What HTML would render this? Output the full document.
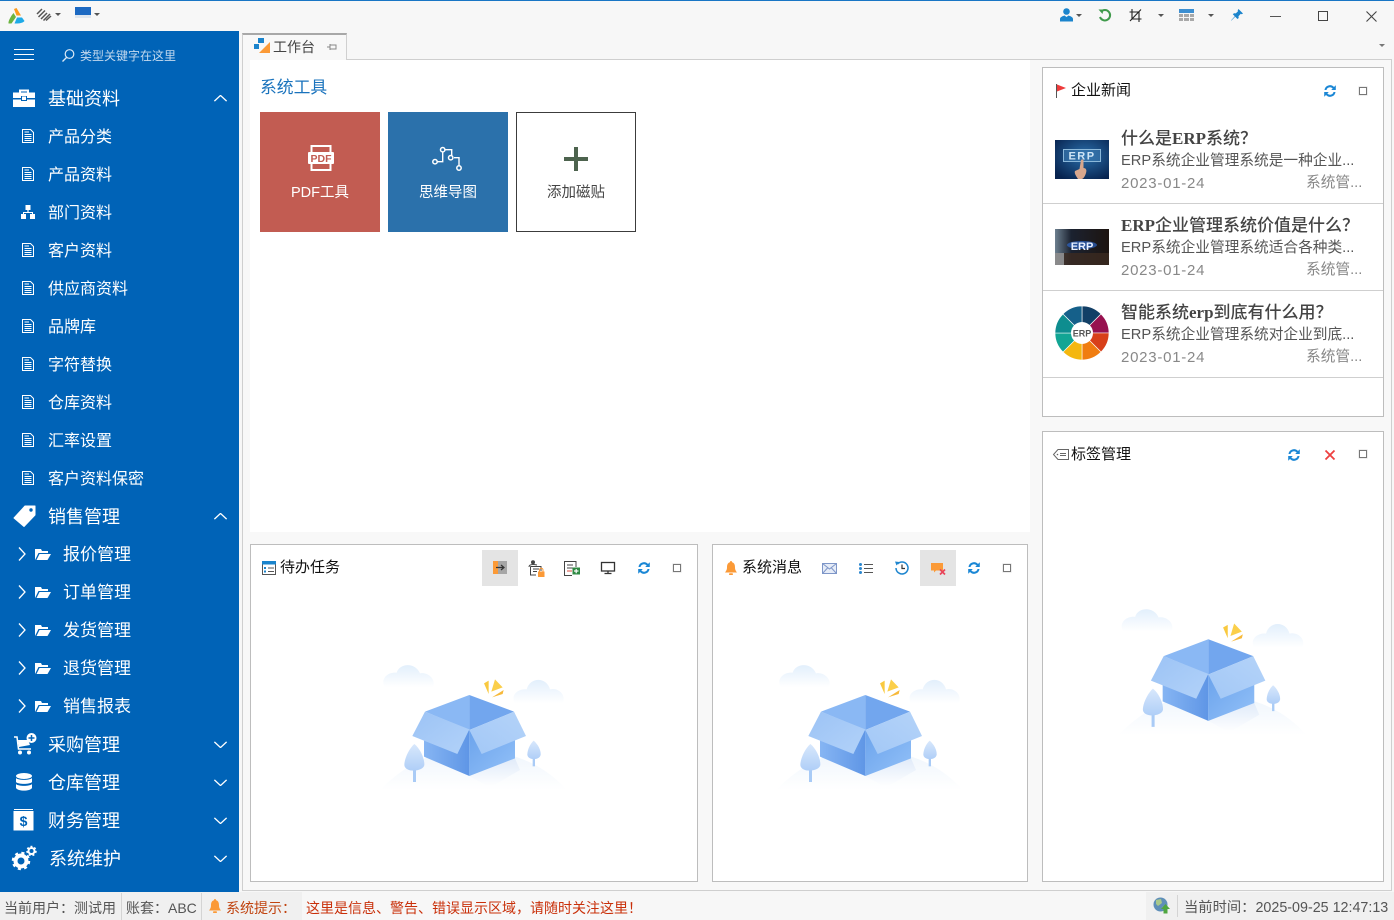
<!DOCTYPE html>
<html lang="zh"><head><meta charset="utf-8"><title>工作台</title>
<style>
*{margin:0;padding:0;box-sizing:border-box}
html,body{width:1394px;height:920px;overflow:hidden;background:#f7f7f7}
body{position:relative;font-family:"Liberation Sans","Noto Sans CJK SC",sans-serif;font-size:14px;color:#333}
.a{position:absolute;white-space:nowrap}
svg{position:absolute;overflow:visible}
#side{left:0;top:31px;width:239px;height:861px;background:#0063b7}
.m{position:absolute;left:48px;color:#fff;font-size:18px;line-height:24px;white-space:nowrap}
.s{position:absolute;left:48px;color:#fff;font-size:16px;line-height:24px;white-space:nowrap}
.f{position:absolute;left:63px;color:#fff;font-size:17px;line-height:24px;white-space:nowrap}
.panel{position:absolute;background:#fff;border:1px solid #bdbdbd}
.t{font-size:15px;line-height:20px;color:#111}
.nt{position:absolute;left:1121px;font-family:"Liberation Serif","Noto Sans CJK SC",serif;font-weight:500;font-size:17px;line-height:22px;color:#444;white-space:nowrap}
.nt b{font-weight:700}
.nd{position:absolute;left:1121px;font-size:14.7px;line-height:20px;color:#555;white-space:nowrap}
.nm{position:absolute;left:1121px;font-size:15px;line-height:20px;color:#888;white-space:nowrap;letter-spacing:.75px}
.na{position:absolute;left:1306px;font-size:14.7px;line-height:20px;color:#888;white-space:nowrap}
.line{position:absolute;left:1043px;width:340px;height:1px;background:#cfcfcf}
.st{position:absolute;top:898px;font-size:14px;line-height:20px;color:#555;white-space:nowrap}
.tile{position:absolute;top:112px;width:120px;height:120px;text-align:center;font-size:14.5px}
.tile span{position:absolute;left:0;right:0;top:71px;line-height:20px}
.sq{position:absolute;width:8px;height:8px;border:1px solid #777;box-shadow:0 0 0 .5px #ddd}
</style></head>
<body>
<svg width="0" height="0" style="position:absolute">
<defs>
<linearGradient id="cl" x1="0" y1="0" x2="0" y2="1"><stop offset="0" stop-color="#e2effc"/><stop offset="1" stop-color="#fff"/></linearGradient>
<linearGradient id="hl" x1="0" y1="0" x2="0" y2="1"><stop offset="0" stop-color="#eef5fc"/><stop offset="1" stop-color="#fff"/></linearGradient>
<linearGradient id="bl" x1="0" y1="0" x2="1" y2="0"><stop offset="0" stop-color="#86b5f3"/><stop offset="1" stop-color="#5f96e6"/></linearGradient>
<linearGradient id="br" x1="0" y1="0" x2="1" y2="1"><stop offset="0" stop-color="#6ba3ec"/><stop offset="1" stop-color="#93c1f8"/></linearGradient>
<linearGradient id="fl" x1="0" y1="0" x2="1" y2="1"><stop offset="0" stop-color="#9cc3f5"/><stop offset="1" stop-color="#b2d2f9"/></linearGradient>
<linearGradient id="fr" x1="1" y1="0" x2="0" y2="1"><stop offset="0" stop-color="#b4d3f9"/><stop offset="1" stop-color="#a3c8f6"/></linearGradient>
<linearGradient id="tr" x1="0" y1="0" x2="0" y2="1"><stop offset="0" stop-color="#d8e8fc"/><stop offset="1" stop-color="#afcef7"/></linearGradient>
<linearGradient id="sh" x1="0" y1="0" x2="0" y2="1"><stop offset="0" stop-color="#dfeaf9"/><stop offset="1" stop-color="#fff"/></linearGradient>
<symbol id="box" viewBox="0 0 630 450">
<path d="M30 420C110 340 190 300 300 300C420 300 520 340 590 420Z" fill="url(#hl)"/>
<path d="M45 112C30 90 50 65 80 68C88 40 135 35 150 70C175 65 200 90 188 112Z" fill="url(#cl)"/>
<path d="M435 160C420 135 445 115 470 118C480 80 530 80 540 118C565 112 590 135 578 160Z" fill="url(#cl)"/>
<path d="M165 322L298 378L360 412L450 360L435 325Z" fill="url(#sh)"/>
<path d="M165 185L298 135V240Z" fill="#8ab8f4"/><path d="M298 135L432 185L298 240Z" fill="#72a6ee"/>
<path d="M162 270L298 240V378L162 320Z" fill="url(#bl)"/>
<path d="M298 240L435 270V325L298 378Z" fill="url(#br)"/>
<path d="M165 185L298 238L262 312L127 258Z" fill="url(#fl)"/>
<path d="M432 185L468 258L335 312L298 240Z" fill="url(#fr)"/>
<rect x="129" y="360" width="9" height="36" fill="#a9cbf6"/>
<path d="M133 282C150 295 164 325 163 345C160 365 105 370 103 345C103 325 118 295 133 282Z" fill="url(#tr)"/>
<rect x="488" y="325" width="7" height="24" fill="#a9cbf6"/>
<path d="M491 272C503 282 513 300 512 314C510 332 473 332 472 314C472 300 480 282 491 272Z" fill="url(#tr)"/>
<path d="M342 100L356 92L356 132Z" fill="#f9c93f"/><path d="M375 88L398 112L364 125Z" fill="#fbcf4a"/><path d="M366 142L401 120L398 132Z" fill="#f7b93a"/>
</symbol>
<symbol id="doc" viewBox="0 0 12 14"><path d="M.5 .5H8.500L11.500 3.500V13.500H.5Z" fill="none" stroke="#fff"/><path d="M2.500 3H7M2.500 5.500H9.500M2.500 7.500H9.500M2.500 9.500H9.500M2.500 11.500H9.500" stroke="#fff"/></symbol>
<symbol id="chevd" viewBox="0 0 16 8"><path d="M1 1L8 7.500L15 1" fill="none" stroke="#fff" stroke-width="1.500"/></symbol>
<symbol id="chevu" viewBox="0 0 16 8"><path d="M1 7L8 .5L15 7" fill="none" stroke="#fff" stroke-width="1.500"/></symbol>
<symbol id="chevr" viewBox="0 0 8 14"><path d="M1 .5L7 7L1 13.500" fill="none" stroke="#fff" stroke-width="1.300"/></symbol>
<symbol id="fold" viewBox="0 0 16 11"><path d="M0 11V0H6L7 2H13V4H3.500L0 11Z" fill="#fff"/><path d="M4.500 5H16L12.500 11H1.500Z" fill="#fff"/></symbol>
<symbol id="ref" viewBox="0 0 14 14"><path d="M1.500 6A5.500 5.500 0 0 1 11 3L12.800 1.200V6H8.200L9.700 4.500A3.600 3.600 0 0 0 3.500 6Z" fill="#1b87d5"/><path d="M12.500 8A5.500 5.500 0 0 1 3 11L1.200 12.800V8H5.800L4.300 9.500A3.600 3.600 0 0 0 10.500 8Z" fill="#1b87d5"/></symbol>
<symbol id="bell" viewBox="0 0 12 14"><path d="M6 0C7 0 7 1 7 1.200C9.500 1.800 10 4 10 6.500C10 9 11 10 12 11.500H0C1 10 2 9 2 6.500C2 4 2.500 1.800 5 1.200C5 1 5 0 6 0Z" fill="#fb9a37"/><rect x="4" y="12.300" width="4" height="1.700" rx=".8" fill="#fb9a37"/></symbol>
</defs></svg>

<!-- top bar -->
<div class="a" style="left:0;top:0;width:1394px;height:1px;background:#1976c5"></div>
<svg style="left:8px;top:8px" width="17" height="16" viewBox="0 0 17 16"><path d="M6 1L8.500 0L13 7.500L8.500 7.500Z" fill="#fc9a1c"/><path d="M5.500 5L8 9L3.500 15.500L.5 15.500C0 13 3 8 5.500 5Z" fill="#6cb43f"/><path d="M9 9.500H14L16.500 13C15 15 11 15.700 6.500 15.500Z" fill="#1eaae7"/></svg>
<svg style="left:37px;top:9px" width="14" height="12" viewBox="0 0 14 12"><path d="M0 5L5 0M1.500 8L8 1.500M4 10L10 4M6.500 11.500L13 5M9 11.500L14 7" stroke="#555" stroke-width="1.500"/></svg>
<svg style="left:55px;top:13px" width="6" height="3" viewBox="0 0 6 3"><path d="M0 0H6L3 3Z" fill="#555"/></svg>
<div class="a" style="left:75px;top:7px;width:16px;height:8px;background:#1c69c2"></div>
<div class="a" style="left:75px;top:15px;width:16px;height:3px;background:#dfe6ee"></div>
<svg style="left:94px;top:13px" width="6" height="3" viewBox="0 0 6 3"><path d="M0 0H6L3 3Z" fill="#555"/></svg>

<svg style="left:1060px;top:8px" width="13" height="14" viewBox="0 0 13 14"><circle cx="6.500" cy="3.500" r="3.300" fill="#1b84cc"/><path d="M0 13.500V11C0 9 3 8 4.500 7.500L6.500 9L8.500 7.500C10 8 13 9 13 11V13.500Z" fill="#1b84cc"/></svg>
<svg style="left:1076px;top:14px" width="6" height="3" viewBox="0 0 6 3"><path d="M0 0H6L3 3Z" fill="#555"/></svg>
<svg style="left:1098px;top:9px" width="14" height="13" viewBox="0 0 14 13"><path d="M3 2.800A5.200 5.200 0 1 1 2 8" fill="none" stroke="#3f9a4b" stroke-width="2"/><path d="M.5 .5L5.500 .5L4.500 5Z" fill="#3f9a4b"/></svg>
<svg style="left:1129px;top:9px" width="13" height="13" viewBox="0 0 13 13"><path d="M3 0V10H12.500M.5 3H10V13M12 .5L1 12" fill="none" stroke="#222" stroke-width="1.100"/></svg>
<svg style="left:1158px;top:14px" width="6" height="3" viewBox="0 0 6 3"><path d="M0 0H6L3 3Z" fill="#555"/></svg>
<svg style="left:1179px;top:9px" width="15" height="12" viewBox="0 0 15 12"><rect width="15" height="4" fill="#3d8fd1"/><path d="M0 5H4V8H0ZM5 5H10V8H5ZM11 5H15V8H11ZM0 9H4V12H0ZM5 9H10V12H5ZM11 9H15V12H11Z" fill="#a9a9a9"/></svg>
<svg style="left:1208px;top:14px" width="6" height="3" viewBox="0 0 6 3"><path d="M0 0H6L3 3Z" fill="#555"/></svg>
<svg style="left:1231px;top:9px" width="12" height="12" viewBox="0 0 12 12"><path d="M7.500 0L12 4.500L10.700 5.300L9.800 4.800L7.500 7.200L7.700 9L6.500 10L4.200 7.700L.5 11.500L0 11.500L3.800 7.200L1.800 5.200L3 4.200L4.800 4.400L7 2.200L6.700 1.200Z" fill="#1b84cc"/></svg>
<div class="a" style="left:1270px;top:16px;width:11px;height:1px;background:#555"></div>
<div class="a" style="left:1318px;top:11px;width:10px;height:10px;border:1px solid #444"></div>
<svg style="left:1366px;top:11px" width="11" height="11" viewBox="0 0 11 11"><path d="M.5 .5L10.500 10.500M10.500 .5L.5 10.500" stroke="#444" stroke-width="1.100"/></svg>
<svg style="left:1379px;top:44px" width="6" height="3" viewBox="0 0 6 3"><path d="M0 0H6L3 3Z" fill="#777"/></svg>

<!-- sidebar -->
<div id="side" class="a"></div>
<svg style="left:14px;top:49px" width="20" height="12" viewBox="0 0 20 12"><path d="M0 .5H20M0 5.500H20M0 10.500H20" stroke="#fff"/></svg>
<svg style="left:61px;top:49px" width="14" height="13" viewBox="0 0 14 13"><circle cx="8.500" cy="5" r="4.300" fill="none" stroke="#dbe9f6" stroke-width="1.200"/><path d="M5.500 8.500L1.500 12.500" stroke="#dbe9f6" stroke-width="1.300"/></svg>
<div class="a" style="left:80px;top:46px;font-size:12px;line-height:20px;color:#c3d9ee">类型关键字在这里</div>

<svg style="left:13px;top:89px" width="22" height="18" viewBox="0 0 22 18"><path d="M7 4V1.500H15V4" fill="none" stroke="#fff" stroke-width="2"/><path d="M0 3.500H22V9H14V7H8V9H0Z" fill="#fff"/><path d="M0 10.500H8V12H14V10.500H22V18H0Z" fill="#fff"/><rect x="9" y="7.500" width="4" height="3.500" fill="#fff"/></svg>
<div class="m" style="top:87px">基础资料</div><svg style="left:213px;top:95px" width="15" height="7"><use href="#chevu" width="15" height="7"/></svg>
<svg style="left:22px;top:129px" width="12" height="14"><use href="#doc" width="12" height="14"/></svg><div class="s" style="top:126px">产品分类</div>
<svg style="left:22px;top:167px" width="12" height="14"><use href="#doc" width="12" height="14"/></svg><div class="s" style="top:164px">产品资料</div>
<svg style="left:21px;top:205px" width="14" height="14" viewBox="0 0 14 14"><path d="M4.500 0H9.500V5H7.600V7H12V9H14V14H9V9H11V8H3V9H5V14H0V9H2V7H6.400V5H4.500Z" fill="#fff"/></svg><div class="s" style="top:202px">部门资料</div>
<svg style="left:22px;top:243px" width="12" height="14"><use href="#doc" width="12" height="14"/></svg><div class="s" style="top:240px">客户资料</div>
<svg style="left:22px;top:281px" width="12" height="14"><use href="#doc" width="12" height="14"/></svg><div class="s" style="top:278px">供应商资料</div>
<svg style="left:22px;top:319px" width="12" height="14"><use href="#doc" width="12" height="14"/></svg><div class="s" style="top:316px">品牌库</div>
<svg style="left:22px;top:357px" width="12" height="14"><use href="#doc" width="12" height="14"/></svg><div class="s" style="top:354px">字符替换</div>
<svg style="left:22px;top:395px" width="12" height="14"><use href="#doc" width="12" height="14"/></svg><div class="s" style="top:392px">仓库资料</div>
<svg style="left:22px;top:433px" width="12" height="14"><use href="#doc" width="12" height="14"/></svg><div class="s" style="top:430px">汇率设置</div>
<svg style="left:22px;top:471px" width="12" height="14"><use href="#doc" width="12" height="14"/></svg><div class="s" style="top:468px">客户资料保密</div>

<svg style="left:13px;top:505px" width="23" height="22" viewBox="0 0 23 22"><path d="M12 1H22V10L11 21.500L1 13Z" fill="#fff" stroke="#fff" stroke-linejoin="round"/><circle cx="18" cy="5" r="1.700" fill="#0063b7"/></svg>
<div class="m" style="top:505px">销售管理</div><svg style="left:213px;top:513px" width="15" height="7"><use href="#chevu" width="15" height="7"/></svg>
<svg style="left:18px;top:547px" width="8" height="14"><use href="#chevr" width="8" height="14"/></svg><svg style="left:35px;top:549px" width="16" height="11"><use href="#fold" width="16" height="11"/></svg><div class="f" style="top:543px">报价管理</div>
<svg style="left:18px;top:585px" width="8" height="14"><use href="#chevr" width="8" height="14"/></svg><svg style="left:35px;top:587px" width="16" height="11"><use href="#fold" width="16" height="11"/></svg><div class="f" style="top:581px">订单管理</div>
<svg style="left:18px;top:623px" width="8" height="14"><use href="#chevr" width="8" height="14"/></svg><svg style="left:35px;top:625px" width="16" height="11"><use href="#fold" width="16" height="11"/></svg><div class="f" style="top:619px">发货管理</div>
<svg style="left:18px;top:661px" width="8" height="14"><use href="#chevr" width="8" height="14"/></svg><svg style="left:35px;top:663px" width="16" height="11"><use href="#fold" width="16" height="11"/></svg><div class="f" style="top:657px">退货管理</div>
<svg style="left:18px;top:699px" width="8" height="14"><use href="#chevr" width="8" height="14"/></svg><svg style="left:35px;top:701px" width="16" height="11"><use href="#fold" width="16" height="11"/></svg><div class="f" style="top:695px">销售报表</div>

<svg style="left:14px;top:733px" width="23" height="22" viewBox="0 0 23 22"><path d="M0 4H3L4.500 16H17" fill="none" stroke="#fff" stroke-width="1.500"/><path d="M4 7H14L16 12L5 14Z" fill="#fff"/><circle cx="6" cy="19.500" r="2" fill="#fff"/><circle cx="15" cy="19.500" r="2" fill="#fff"/><circle cx="17.500" cy="5" r="5" fill="#fff"/><path d="M17.500 2V8M14.500 5H20.500" stroke="#0063b7" stroke-width="1.500"/></svg>
<div class="m" style="top:733px">采购管理</div><svg style="left:213px;top:741px" width="15" height="7"><use href="#chevd" width="15" height="7"/></svg>
<svg style="left:16px;top:773px" width="16" height="18" viewBox="0 0 16 18"><ellipse cx="8" cy="3" rx="8" ry="3" fill="#fff"/><path d="M0 5C2 7.500 14 7.500 16 5V9C14 11.500 2 11.500 0 9Z" fill="#fff"/><path d="M0 11C2 13.500 14 13.500 16 11V15C14 18.500 2 18.500 0 15Z" fill="#fff"/></svg>
<div class="m" style="top:771px">仓库管理</div><svg style="left:213px;top:779px" width="15" height="7"><use href="#chevd" width="15" height="7"/></svg>
<svg style="left:13px;top:809px" width="21" height="22" viewBox="0 0 21 22"><path d="M1 .5H20" stroke="#fff"/><rect x=".5" y="2" width="20" height="19.500" fill="#fff"/><text x="10.500" y="17" text-anchor="middle" font-size="14" font-weight="700" font-family="Liberation Sans" fill="#0063b7">$</text></svg>
<div class="m" style="top:809px">财务管理</div><svg style="left:213px;top:817px" width="15" height="7"><use href="#chevd" width="15" height="7"/></svg>
<svg style="left:12px;top:846px" width="25" height="24" viewBox="0 0 25 24"><circle cx="9" cy="15" r="5.500" fill="none" stroke="#fff" stroke-width="4"/><circle cx="9" cy="15" r="8" fill="none" stroke="#fff" stroke-width="2.500" stroke-dasharray="3 3.300"/><circle cx="19.500" cy="5" r="3" fill="none" stroke="#fff" stroke-width="2"/><circle cx="19.500" cy="5" r="4.500" fill="none" stroke="#fff" stroke-width="1.500" stroke-dasharray="2 2"/></svg>
<div class="m" style="top:847px;left:49px">系统维护</div><svg style="left:213px;top:855px" width="15" height="7"><use href="#chevd" width="15" height="7"/></svg>

<!-- tab and workspace -->
<div class="a" style="left:242px;top:59px;width:1150px;height:832px;border:1px solid #cfcfcf;background:#f8f8f8"></div>
<div class="a" style="left:242px;top:33px;width:105px;height:27px;background:#f8f8f8;border:1px solid #d0d0d0;border-top:2px solid #a8a8a8;border-bottom:0"></div>
<svg style="left:254px;top:38px" width="16" height="15" viewBox="0 0 16 15"><path d="M16 4V15H5Z" fill="#fb9a37"/><rect x="4" y="0" width="6" height="5" fill="#1b84cc"/><rect x="0" y="6" width="5" height="5" fill="#1b84cc"/></svg>
<div class="a" style="left:273px;top:37px;font-size:14px;line-height:20px;color:#444">工作台</div>
<svg style="left:327px;top:43px" width="10" height="8" viewBox="0 0 10 8"><path d="M0 4H3M3 1V7M3 2H9V6H3M9 3.500" fill="none" stroke="#888"/></svg>

<div class="a" style="left:250px;top:60px;width:780px;height:472px;background:#fff"></div>
<div class="a" style="left:260px;top:77px;font-size:16.800px;line-height:22px;color:#1a73bd">系统工具</div>

<div class="tile" style="left:260px;background:#c25c52;color:#fff"><span>PDF工具</span></div>
<svg style="left:308px;top:145px" width="26" height="26" viewBox="0 0 26 26"><path d="M3.500 7V1H22.500V7M3.500 19V25H22.500V19" fill="none" stroke="#fff" stroke-width="2"/><rect x="0" y="7" width="26" height="12" rx="1" fill="#fff"/><text x="13" y="17" text-anchor="middle" font-size="10.500" font-weight="700" font-family="Liberation Sans" fill="#c25c52">PDF</text></svg>
<div class="tile" style="left:388px;background:#2b71ab;color:#fff"><span>思维导图</span></div>
<svg style="left:432px;top:147px" width="30" height="25" viewBox="0 0 30 25"><path d="M5 14.700H10.700V5M13 2.700H19.700V8.500M22 10.700H27V19" fill="none" stroke="#fff" stroke-width="1.400"/><circle cx="3" cy="14.700" r="2.200" fill="#2b71ab" stroke="#fff" stroke-width="1.500"/><circle cx="10.700" cy="2.700" r="2.200" fill="#2b71ab" stroke="#fff" stroke-width="1.500"/><circle cx="18.700" cy="10.700" r="2.200" fill="#2b71ab" stroke="#fff" stroke-width="1.500"/><circle cx="27" cy="21" r="2.200" fill="#2b71ab" stroke="#fff" stroke-width="1.500"/></svg>
<div class="tile" style="left:516px;background:#fff;border:1px solid #3c3c3c;color:#444"><span style="top:70px">添加磁贴</span></div>
<svg style="left:564px;top:147px" width="24" height="24" viewBox="0 0 24 24"><path d="M12 0V24M0 12H24" stroke="#4d634e" stroke-width="4"/></svg>

<!-- right top panel -->
<div class="panel" style="left:1042px;top:67px;width:342px;height:350px"></div>
<svg style="left:1056px;top:84px" width="11" height="14" viewBox="0 0 11 14"><path d="M.5 0V14" stroke="#555"/><path d="M1 0.500L10 4L1 7.500Z" fill="#ee3b3b"/></svg>
<div class="a t" style="left:1071px;top:81px">企业新闻</div>
<svg style="left:1323px;top:84px" width="14" height="14"><use href="#ref" width="14" height="14"/></svg>
<div class="sq" style="left:1359px;top:87px"></div>

<svg style="left:1055px;top:140px" width="54" height="39" viewBox="0 0 54 39"><defs><radialGradient id="e1" cx=".55" cy=".4" r=".7"><stop offset="0" stop-color="#2a6eaa"/><stop offset="1" stop-color="#07234f"/></radialGradient></defs><rect width="54" height="39" fill="url(#e1)"/><rect x="8.500" y="9.500" width="37" height="12" fill="#3f7fb6" fill-opacity=".55" stroke="#8bb8da"/><text x="27" y="19.500" text-anchor="middle" font-size="11" font-weight="700" letter-spacing="1.500" font-family="Liberation Sans" fill="#cfe5f5">ERP</text><path d="M26 20C27 19 28.500 19 28.500 21V28C31 28 32 30 31 33C30 36 29 38 27 39H23C21 36 19 33 20 31L24.500 29Z" fill="#d8a78d"/></svg>
<div class="nt" style="top:128px">什么是<b>ERP</b>系统？</div>
<div class="nd" style="top:151px">ERP系统企业管理系统是一种企业...</div>
<div class="nm" style="top:174px">2023-01-24</div><div class="na" style="top:173px">系统管...</div>
<div class="line" style="top:203px"></div>

<svg style="left:1055px;top:229px" width="54" height="36" viewBox="0 0 54 36"><defs><linearGradient id="e2" x1="0" y1="0" x2="1" y2="0"><stop offset="0" stop-color="#6c7f8f"/><stop offset=".3" stop-color="#1b2230"/><stop offset="1" stop-color="#1d1410"/></linearGradient></defs><rect width="54" height="36" fill="url(#e2)"/><rect y="24" width="54" height="12" fill="#3c2a20" opacity=".8"/><rect y="24" width="9" height="12" fill="#a8adb0" opacity=".7"/><ellipse cx="27" cy="16" rx="15" ry="4" fill="#2f6fe0" opacity=".6"/><text x="27" y="21" text-anchor="middle" font-size="11" font-weight="700" font-family="Liberation Sans" fill="#e8f0ff">ERP</text></svg>
<div class="nt" style="top:215px"><b>ERP</b>企业管理系统价值是什么？</div>
<div class="nd" style="top:238px">ERP系统企业管理系统适合各种类...</div>
<div class="nm" style="top:261px">2023-01-24</div><div class="na" style="top:260px">系统管...</div>
<div class="line" style="top:290px"></div>

<svg style="left:1055px;top:306px" width="54" height="54" viewBox="0 0 54 54"><g stroke="#fff" stroke-width=".6"><path d="M27 27L27 0A27 27 0 0 1 46 8Z" fill="#123f66"/><path d="M27 27L46 8A27 27 0 0 1 54 27Z" fill="#97114f"/><path d="M27 27L54 27A27 27 0 0 1 46 46Z" fill="#d8401a"/><path d="M27 27L46 46A27 27 0 0 1 27 54Z" fill="#f07d10"/><path d="M27 27L27 54A27 27 0 0 1 8 46Z" fill="#f4b70f"/><path d="M27 27L8 46A27 27 0 0 1 0 27Z" fill="#12a594"/><path d="M27 27L0 27A27 27 0 0 1 8 8Z" fill="#0e8d8f"/><path d="M27 27L8 8A27 27 0 0 1 27 0Z" fill="#15608a"/></g><circle cx="27" cy="27" r="11" fill="#fff"/><text x="27" y="30.500" text-anchor="middle" font-size="9" font-weight="700" font-family="Liberation Sans" fill="#555">ERP</text></svg>
<div class="nt" style="top:302px">智能系统<b>erp</b>到底有什么用？</div>
<div class="nd" style="top:325px">ERP系统企业管理系统对企业到底...</div>
<div class="nm" style="top:348px">2023-01-24</div><div class="na" style="top:347px">系统管...</div>
<div class="line" style="top:377px"></div>

<!-- tag panel -->
<div class="panel" style="left:1042px;top:431px;width:342px;height:451px"></div>
<svg style="left:1053px;top:449px" width="16" height="11" viewBox="0 0 16 11"><path d="M5 .5H15.500V10.500H5L.5 5.500Z" fill="none" stroke="#666"/><path d="M7 4.500H13M7 6.500H13" stroke="#666"/><circle cx="4.500" cy="5.500" r=".8" fill="#666"/></svg>
<div class="a t" style="left:1071px;top:445px">标签管理</div>
<svg style="left:1287px;top:448px" width="14" height="14"><use href="#ref" width="14" height="14"/></svg>
<svg style="left:1325px;top:450px" width="10" height="10" viewBox="0 0 10 10"><path d="M.5 .5L9.500 9.500M9.500 .5L.5 9.500" stroke="#ee4040" stroke-width="1.800"/></svg>
<div class="sq" style="left:1359px;top:450px"></div>
<svg style="left:1108px;top:594px" width="212" height="151"><use href="#box" width="212" height="151"/></svg>

<!-- todo panel -->
<div class="panel" style="left:250px;top:544px;width:448px;height:338px"></div>
<svg style="left:262px;top:561px" width="14" height="14" viewBox="0 0 14 14"><rect x=".5" y=".5" width="13" height="13" fill="#fff" stroke="#555"/><rect width="14" height="3.500" fill="#1b84cc"/><path d="M2 6H4V8H2ZM2 9.500H4V11.500H2Z" fill="#1b84cc"/><path d="M6 7H12M6 10.500H12" stroke="#555"/></svg>
<div class="a t" style="left:280px;top:558px">待办任务</div>
<div class="a" style="left:482px;top:550px;width:36px;height:36px;background:#e4e4e4"></div>
<svg style="left:493px;top:561px" width="14" height="13" viewBox="0 0 14 13"><rect width="5" height="13" fill="#fb9a37"/><rect x="5" width="9" height="13" fill="#a6a6a6"/><path d="M3 6.500H10M8 4L11 6.500L8 9" fill="none" stroke="#333" stroke-width="1.200"/></svg>
<svg style="left:528px;top:560px" width="17" height="17" viewBox="0 0 17 17"><circle cx="5" cy="2.200" r="2" fill="#444"/><path d="M1 7C1 5 3 4.500 5 4.500C7 4.500 9 5 9 5" fill="none" stroke="#444"/><path d="M2.500 6.500H13V11M2.500 6.500V15H8" fill="none" stroke="#444"/><path d="M5 9H11M5 11.500H9" stroke="#444"/><rect x="10" y="11.500" width="6.500" height="5.500" fill="#fb9a37"/><path d="M11.500 11.500V10A1.700 1.700 0 0 1 15 10V11.500" fill="none" stroke="#fb9a37"/></svg>
<svg style="left:564px;top:561px" width="16" height="15" viewBox="0 0 16 15"><path d="M10 .5H.5V14.500H8M10 .5H12V6" fill="none" stroke="#444"/><path d="M3 4H9M3 7H9" stroke="#444"/><path d="M3 10H8" stroke="#d94b3e"/><rect x="8.500" y="6.500" width="7.500" height="7" fill="#2f8a43"/><path d="M12.200 8V12.200M10 10H14.500" stroke="#fff" stroke-width="1.200"/></svg>
<svg style="left:601px;top:562px" width="14" height="12" viewBox="0 0 14 12"><rect x=".5" y=".5" width="13" height="8.500" fill="none" stroke="#333" stroke-width="1.300"/><path d="M7 9V11M3.500 11.500H10.500" stroke="#333" stroke-width="1.300"/></svg>
<svg style="left:637px;top:561px" width="14" height="14"><use href="#ref" width="14" height="14"/></svg>
<div class="sq" style="left:673px;top:564px"></div>
<svg style="left:370px;top:650px" width="210" height="150"><use href="#box" width="210" height="150"/></svg>

<!-- messages panel -->
<div class="panel" style="left:712px;top:544px;width:316px;height:338px"></div>
<svg style="left:725px;top:561px" width="12" height="14"><use href="#bell" width="12" height="14"/></svg>
<div class="a t" style="left:742px;top:558px">系统消息</div>
<svg style="left:822px;top:563px" width="15" height="11" viewBox="0 0 15 11"><rect x=".5" y=".5" width="14" height="10" fill="#e6ecf7" stroke="#7e96c8"/><path d="M.5 .5L7.500 6L14.500 .5M.5 10.500L5.500 5M14.500 10.500L9.500 5" fill="none" stroke="#7e96c8"/></svg>
<svg style="left:859px;top:563px" width="14" height="11" viewBox="0 0 14 11"><circle cx="1.500" cy="1.500" r="1.500" fill="#2b87cf"/><circle cx="1.500" cy="5.500" r="1.500" fill="#2b87cf"/><circle cx="1.500" cy="9.500" r="1.500" fill="#2b87cf"/><path d="M5 1.500H14M5 5.500H14M5 9.500H14" stroke="#555"/></svg>
<svg style="left:895px;top:561px" width="14" height="14" viewBox="0 0 14 14"><path d="M2.500 3A6 6 0 1 1 1 7" fill="none" stroke="#1f86cf" stroke-width="1.500"/><path d="M0 .5L4.500 1L1.500 4.500Z" fill="#1f86cf"/><path d="M7 3.500V7.500H10" fill="none" stroke="#333" stroke-width="1.200"/></svg>
<div class="a" style="left:920px;top:550px;width:36px;height:36px;background:#e4e4e4"></div>
<svg style="left:931px;top:563px" width="15" height="12" viewBox="0 0 15 12"><path d="M0 0H12V7.500H5L3 9.500V7.500H0Z" fill="#fb9a37"/><path d="M9 6.500L14 11.500M14 6.500L9 11.500" stroke="#e8445a" stroke-width="1.700"/></svg>
<svg style="left:967px;top:561px" width="14" height="14"><use href="#ref" width="14" height="14"/></svg>
<div class="sq" style="left:1003px;top:564px"></div>
<svg style="left:766px;top:650px" width="210" height="150"><use href="#box" width="210" height="150"/></svg>

<!-- status bar -->
<div class="a" style="left:0;top:892px;width:1394px;height:28px;background:#f7f7f7"></div>
<div class="a" style="left:0;top:892px;width:302px;height:28px;background:#f0f0f0"></div>
<div class="a" style="left:1146px;top:892px;width:248px;height:28px;background:#f0f0f0"></div>
<div class="a" style="left:121px;top:893px;width:1px;height:27px;background:#d4d4d4"></div>
<div class="a" style="left:201px;top:893px;width:1px;height:27px;background:#d4d4d4"></div>
<div class="a" style="left:1177px;top:895px;width:1px;height:22px;background:#d4d4d4"></div>
<div class="st" style="left:4px">当前用户：测试用</div>
<div class="st" style="left:126px">账套：ABC</div>
<svg style="left:209px;top:899px" width="12" height="14"><use href="#bell" width="12" height="14"/></svg>
<div class="st" style="left:226px;color:#c0430f">系统提示：</div>
<div class="st" style="left:306px;color:#c9300a">这里是信息、警告、错误显示区域，请随时关注这里！</div>
<svg style="left:1153px;top:897px" width="17" height="17" viewBox="0 0 17 17"><circle cx="7.500" cy="7.500" r="7" fill="#5f8fb8"/><path d="M3 3L8 2L9 6L5 9L3 7ZM9 10L13 9L12 13Z" fill="#a9c98a"/><path d="M12.500 7L17 12H14.500V16.500H10.500V12H8Z" fill="#4fa63f"/></svg>
<div class="st" style="left:1184px;font-size:14.300px">当前时间：2025-09-25 12:47:13</div>
</body></html>
